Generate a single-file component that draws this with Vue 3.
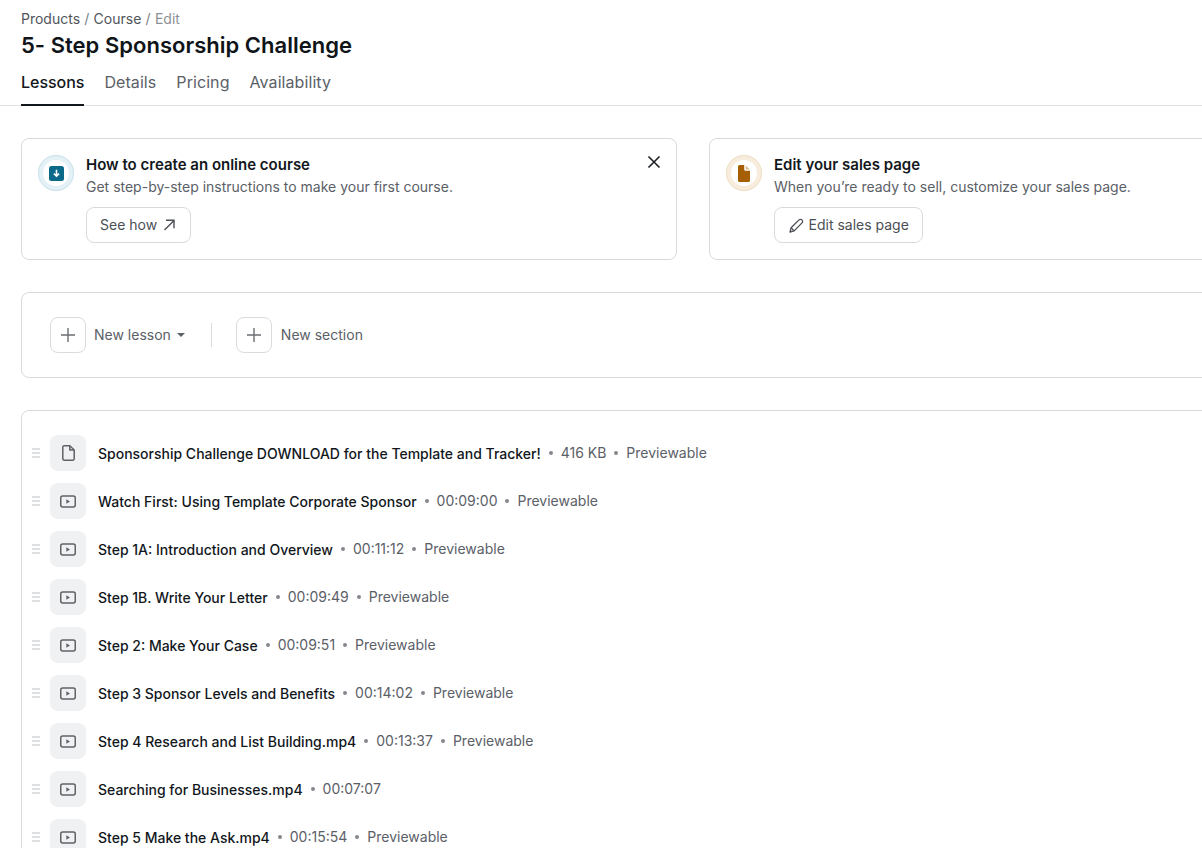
<script setup>
const lessons = [
  { title: 'Sponsorship Challenge DOWNLOAD for the Template and Tracker!', meta: '416 KB', kind: 'file', preview: true },
  { title: 'Watch First: Using Template Corporate Sponsor', meta: '00:09:00', kind: 'video', preview: true },
  { title: 'Step 1A: Introduction and Overview', meta: '00:11:12', kind: 'video', preview: true },
  { title: 'Step 1B. Write Your Letter', meta: '00:09:49', kind: 'video', preview: true },
  { title: 'Step 2: Make Your Case', meta: '00:09:51', kind: 'video', preview: true },
  { title: 'Step 3 Sponsor Levels and Benefits', meta: '00:14:02', kind: 'video', preview: true },
  { title: 'Step 4 Research and List Building.mp4', meta: '00:13:37', kind: 'video', preview: true },
  { title: 'Searching for Businesses.mp4', meta: '00:07:07', kind: 'video', preview: false },
  { title: 'Step 5 Make the Ask.mp4', meta: '00:15:54', kind: 'video', preview: true }
]
const tabs = ['Lessons', 'Details', 'Pricing', 'Availability']
</script>

<template>
  <div class="viewport">
    <main class="page">
      <header class="head">
        <nav class="crumbs">
          <span>Products</span><i>/</i><span>Course</span><i>/</i><em>Edit</em>
        </nav>
        <h1>5- Step Sponsorship Challenge</h1>
      </header>
      <div class="tabs">
        <a v-for="(t, i) in tabs" :key="t" :class="{ active: i === 0 }">{{ t }}</a>
      </div>

      <section class="notices">
        <article class="card notice">
          <div class="badge blue">
            <svg width="15" height="15" viewBox="0 0 15 15">
              <rect width="15" height="15" rx="2.500" fill="#0b6a8a" />
              <path d="M7.500 3.800v6.200M4.900 7.600l2.600 2.600 2.600-2.600" fill="none" stroke="#fff" stroke-width="1.600" />
            </svg>
          </div>
          <div class="notice-body">
            <h2>How to create an online course</h2>
            <p>Get step-by-step instructions to make your first course.</p>
            <button class="btn see">
              <span class="btn-text">See how</span>
              <svg width="14" height="14" viewBox="0 0 14 14" fill="none" stroke="#4b4f55" stroke-width="1.400">
                <path d="M2.500 12 12 2.500M4 2.200h8v8" />
              </svg>
            </button>
          </div>
          <svg class="close" width="14" height="14" viewBox="0 0 14 14" fill="none" stroke="#1b1f23" stroke-width="1.600">
            <path d="M1.500 1.500l11 11M12.500 1.500l-11 11" />
          </svg>
        </article>
        <article class="card notice">
          <div class="badge amber">
            <svg width="12" height="17" viewBox="0 0 12 17">
              <path d="M1.500 0H6.200V4.500A1.200 1.200 0 0 0 7.400 5.700H12V15.500A1.500 1.500 0 0 1 10.500 17H1.500A1.500 1.500 0 0 1 0 15.500V1.500A1.500 1.500 0 0 1 1.500 0z" fill="#a65f05" />
              <path d="M7.600 .6 11.800 4.600H7.600z" fill="#dcbc8c" />
            </svg>
          </div>
          <div class="notice-body">
            <h2>Edit your sales page</h2>
            <p>When you’re ready to sell, customize your sales page.</p>
            <button class="btn">
              <svg width="15" height="15" viewBox="0 0 15 15" fill="none" stroke="#4b4f55" stroke-width="1.300" stroke-linejoin="round">
                <path d="M1 14 2.100 9.800 10 1.900a2.100 2.100 0 0 1 3 3L5.200 12.900z" />
                <path d="M2.100 9.800l3.100 3.100" />
              </svg>
              <span class="btn-text">Edit sales page</span>
            </button>
          </div>
        </article>
      </section>

      <section class="card actions">
        <button class="action">
          <span class="plus">
            <svg width="14" height="14" viewBox="0 0 14 14" stroke="#6a6e73" stroke-width="1.400"><path d="M7 0v14M0 7h14" /></svg>
          </span>
          <span class="action-label">New lesson</span>
          <span class="caret"></span>
        </button>
        <span class="divider"></span>
        <button class="action">
          <span class="plus">
            <svg width="14" height="14" viewBox="0 0 14 14" stroke="#6a6e73" stroke-width="1.400"><path d="M7 0v14M0 7h14" /></svg>
          </span>
          <span class="action-label wide">New section</span>
        </button>
      </section>

      <section class="card list">
        <div v-for="l in lessons" :key="l.title" class="row">
          <span class="grip"><b></b><b></b><b></b></span>
          <span class="tile">
            <svg v-if="l.kind === 'file'" width="13" height="16" viewBox="0 0 13 16" fill="none" stroke="#5f6368" stroke-width="1.500" stroke-linejoin="round">
              <path d="M7.800 .8H2.200A1.400 1.400 0 0 0 .8 2.200v11.600a1.400 1.400 0 0 0 1.400 1.400h8.600a1.400 1.400 0 0 0 1.400-1.400V5z" />
              <path d="M7.800 .8V5H12.200" />
            </svg>
            <svg v-else width="16" height="13" viewBox="0 0 16 13" fill="none">
              <rect x=".75" y=".95" width="14.500" height="11.100" rx="2" stroke="#5f6368" stroke-width="1.500" />
              <path d="M6.300 4.300v4.400L10 6.500z" fill="#5f6368" />
            </svg>
          </span>
          <span class="title">{{ l.title }}</span>
          <span class="dot"></span>
          <span class="meta">{{ l.meta }}</span>
          <template v-if="l.preview">
            <span class="dot"></span>
            <span class="meta">Previewable</span>
          </template>
        </div>
      </section>
    </main>
  </div>
</template>

<style>
html, body { margin: 0; height: 100%; overflow: hidden; background: #fff; }
</style>

<style scoped>
.viewport { width: 1202px; height: 848px; overflow: hidden; }
.page { width: 1365px; padding: 10px 0 0 21px; font-family: Inter, "Liberation Sans", sans-serif; color: #12171c; }
.head { display: flex; flex-direction: column; }
.crumbs { display: flex; gap: 4.250px; font-size: 14px; line-height: 18px; color: #50555b; }
.crumbs i { font-style: normal; color: #7b8087; }
.crumbs em { font-style: normal; color: #8d9197; }
h1 { margin: 3px 0 0; font-size: 22px; line-height: 28px; font-weight: 600; color: #0f1418; letter-spacing: .02px; }
.tabs { display: flex; gap: 20px; margin: 8px 0 0 -21px; padding-left: 21px; border-bottom: 1px solid #e2e3e5; height: 38px; }
.tabs a { font-size: 16px; line-height: 24px; padding-top: 3px; color: #5b6067; box-sizing: border-box; height: 39px; letter-spacing: .08px; }
.tabs a.active { color: #12171c; font-weight: 500; border-bottom: 2px solid #12171c; letter-spacing: -.03px; }
.card { background: #fff; border: 1px solid #d9dadc; border-radius: 8px; box-sizing: border-box; }
.notices { display: grid; grid-template-columns: 656px 656px; gap: 32px; margin-top: 32px; }
.notice { display: flex; gap: 12px; padding: 16px; height: 122px; position: relative; }
.badge { width: 36px; height: 36px; border-radius: 50%; box-sizing: border-box; border: 5px solid; display: flex; align-items: center; justify-content: center; flex: none; background: #fff; }
.badge.blue { border-color: #e4f1f6; outline: 1px solid #c9e2ec; outline-offset: -1px; }
.badge.amber { border-color: #f8eddd; outline: 1px solid #eedfc6; outline-offset: -1px; }
.notice-body { display: flex; flex-direction: column; align-items: flex-start; }
h2 { margin: 0; font-size: 15px; line-height: 20px; font-weight: 600; color: #12171c; }
p { margin: 2px 0 0; font-size: 14px; line-height: 20px; color: #5b6067; }
.btn { margin-top: 10px; height: 36px; padding: 0 13.500px; display: inline-flex; align-items: center; gap: 5px; background: #fff; border: 1px solid #d9dadc; border-radius: 8px; font: inherit; font-size: 14px; color: #4b4f55; }
.btn.see { padding: 0 14px 0 13px; }
.btn-text { padding-bottom: 1px; }
.close { position: absolute; top: 16px; right: 15px; }
.actions { margin-top: 32px; height: 86px; padding: 0 28px; display: flex; align-items: center; gap: 24px; }
.action { display: flex; align-items: center; gap: 8px; padding: 0; background: none; border: 0; font: inherit; font-size: 14px; color: #5b6067; }
.plus { width: 36px; height: 36px; box-sizing: border-box; border: 1px solid #dadbdd; border-radius: 8px; display: flex; align-items: center; justify-content: center; }
.action-label { padding-bottom: 1px; }
.action-label.wide { margin-left: 1px; }
.caret { width: 0; height: 0; margin: 0 2px 0 -2px; border: 4px solid transparent; border-top: 4px solid #5b6067; border-bottom: 0; }
.divider { width: 1px; height: 24px; background: #dadbdd; }
.list { margin-top: 32px; padding: 24px 0 0 10px; display: flex; flex-direction: column; gap: 12px; min-height: 460px; }
.row { display: flex; align-items: center; height: 36px; font-size: 14px; line-height: 20px; }
.grip { width: 8px; display: flex; flex-direction: column; gap: 2px; margin-right: 10px; }
.grip b { display: block; height: 2px; background: #dfe0e2; }
.tile { width: 36px; height: 36px; border-radius: 8px; background: #f0f1f2; display: flex; align-items: center; justify-content: center; margin-right: 12px; flex: none; }
.title { font-weight: 500; color: #12171c; padding-top: 1px; }
.meta { color: #5b6067; }
.dot { width: 4px; height: 4px; border-radius: 50%; background: #85898e; margin: 0 8px; }
</style>
